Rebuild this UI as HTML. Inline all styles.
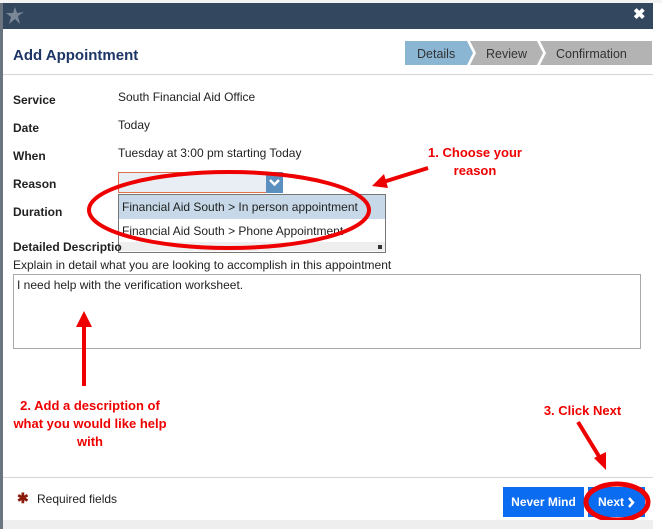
<!DOCTYPE html>
<html><head><style>
body{margin:0;width:662px;height:529px;background:#fff;position:relative;overflow:hidden;font-family:"Liberation Sans",Arial,sans-serif;font-size:12px;color:#222}
.a{position:absolute}
.lbl{left:13px;font-weight:bold;font-size:12px}
.val{left:118px;font-size:12px}
.red{color:#e00;font-weight:bold;font-size:13px;text-align:center}
</style></head><body>
<div class="a" style="left:0;top:0;width:662px;height:3px;background:#f4f4f4"></div>
<div class="a" style="left:0;top:3px;width:653px;height:26px;background:#33475e"></div>
<div class="a" style="left:0;top:3px;width:3px;height:526px;background:#6a7480"></div>
<div class="a" style="left:653px;top:3px;width:9px;height:526px;background:#fff"></div>
<svg class="a" style="left:5px;top:6px" width="20" height="20" viewBox="0 0 20 20"><path d="M10 1 L12 7 L19 6 L13 10 L15 18 L10 13 L4 18 L6 11 L1 7 L8 7Z" fill="#7a8796"/></svg>
<div class="a" style="left:633px;top:5px;color:#fff;font-weight:bold;font-size:15px">✖</div>
<div class="a" style="left:13px;top:47px;font-size:15px;font-weight:bold;color:#1c3565">Add Appointment</div>
<svg class="a" style="left:405px;top:41px" width="250" height="25">
<polygon points="135,0 247,0 247,24 135,24 141,12" fill="#b3b3b3"/>
<polygon points="65,0 132,0 138,12 132,24 65,24 71,12" fill="#b3b3b3"/>
<polygon points="0,0 62,0 68,12 62,24 0,24" fill="#8ab5d3"/>
<text x="12" y="17" font-size="12.5" fill="#333" font-family="Liberation Sans">Details</text>
<text x="81" y="17" font-size="12.5" fill="#333" font-family="Liberation Sans">Review</text>
<text x="151" y="17" font-size="12.5" fill="#333" font-family="Liberation Sans">Confirmation</text>
</svg>
<div class="a" style="left:3px;top:74px;width:650px;height:1px;background:#d5d5d5"></div>
<div class="a lbl" style="top:93px">Service</div><div class="a val" style="top:90px">South Financial Aid Office</div>
<div class="a lbl" style="top:121px">Date</div><div class="a val" style="top:118px">Today</div>
<div class="a lbl" style="top:149px">When</div><div class="a val" style="top:146px">Tuesday at 3:00 pm starting Today</div>
<div class="a lbl" style="top:177px">Reason</div>
<div class="a" style="left:118px;top:172px;width:147px;height:19px;border:1px solid #e07050;background:#e8eef4"></div>
<svg class="a" style="left:266px;top:172px" width="17" height="21"><rect width="17" height="21" fill="#5a8fbf"/><path d="M4 8 L8.5 12.5 L13 8" fill="none" stroke="#fff" stroke-width="2.5"/></svg>
<div class="a lbl" style="top:205px">Duration</div>
<div class="a" style="left:118px;top:194px;width:266px;height:57px;border:1px solid #777;background:#fff"></div>
<div class="a" style="left:119px;top:195px;width:266px;height:24px;background:#c7d9e8"></div>
<div class="a" style="left:119px;top:242px;width:266px;height:9px;background:#eee"></div>
<div class="a" style="left:378px;top:245px;width:4px;height:4px;background:#333"></div>
<div class="a" style="left:122px;top:200px;font-size:12px">Financial Aid South &gt; In person appointment</div>
<div class="a" style="left:122px;top:224px;font-size:12px">Financial Aid South &gt; Phone Appointment</div>
<div class="a lbl" style="top:240px">Detailed Descriptio</div>
<div class="a" style="left:13px;top:258px;font-size:12px">Explain in detail what you are looking to accomplish in this appointment</div>
<div class="a" style="left:13px;top:274px;width:626px;height:73px;border:1px solid #aaa"></div>
<div class="a" style="left:17px;top:278px;font-size:12px">I need help with the verification worksheet.</div>
<svg class="a" style="left:0;top:0" width="662" height="529">
<ellipse cx="229" cy="210" rx="140" ry="38" fill="none" stroke="#e00" stroke-width="4"/>
<line x1="428" y1="168" x2="380" y2="183" stroke="#e00" stroke-width="4"/>
<polygon points="372,186 384,174 388,188" fill="#e00"/>
<line x1="84" y1="386" x2="84" y2="325" stroke="#e00" stroke-width="4"/>
<polygon points="84,311 76,327 92,327" fill="#e00"/>
<line x1="578" y1="422" x2="600" y2="458" stroke="#e00" stroke-width="4"/>
<polygon points="606,470 594,458 606,452" fill="#e00"/>
</svg>
<div class="a red" style="left:420px;top:144px;width:110px;line-height:18px">1. Choose your<br>reason</div>
<div class="a red" style="left:5px;top:397px;width:170px;line-height:18px">2. Add a description of<br>what you would like help<br>with</div>
<div class="a red" style="left:535px;top:403px;width:95px">3. Click Next</div>
<div class="a" style="left:3px;top:477px;width:650px;height:1px;background:#d5d5d5"></div>
<div class="a" style="left:17px;top:490px;color:#8b1a0a;font-weight:bold;font-size:14px">✱</div>
<div class="a" style="left:37px;top:492px;font-size:12px">Required fields</div>
<div class="a" style="left:503px;top:487px;width:81px;height:30px;background:#0a6cf0;color:#fff;font-weight:bold;font-size:12px;line-height:30px;text-align:center">Never Mind</div>
<div class="a" style="left:588px;top:487px;width:57px;height:30px;background:#0a6cf0;color:#fff;font-weight:bold;font-size:12px;line-height:30px;text-align:left;padding-left:10px;box-sizing:border-box">Next</div>
<svg class="a" style="left:0;top:0" width="662" height="529">
<path d="M629 498 L633 502.5 L629 507" fill="none" stroke="#fff" stroke-width="2.5"/>
<ellipse cx="617" cy="502" rx="31" ry="18" fill="none" stroke="#e00" stroke-width="5"/>
</svg>
<div class="a" style="left:3px;top:520px;width:650px;height:9px;background:#eee"></div>
</body></html>
